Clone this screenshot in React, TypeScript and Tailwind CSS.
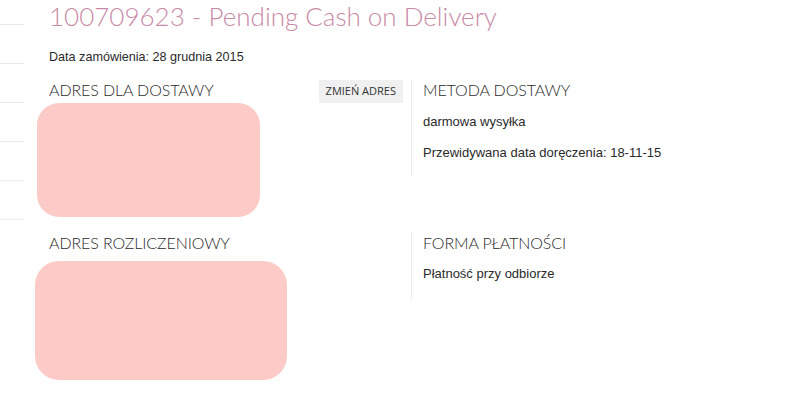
import React from "react";

const heading = "font-['Lato',sans-serif] font-light text-[16px] leading-[20px] text-[#2b2b2b] tracking-[-0.1px]";
const body = "font-['Liberation_Sans',Arial,sans-serif] text-[13px] leading-[15px] text-[#2a2a2a]";

function Sidebar() {
  return (
    <div className="w-[24px] shrink-0 pt-[24px]">
      {[0, 1, 2, 3, 4].map((i) => (
        <div key={i} className="h-[39px] border-t border-[#ebebeb]" />
      ))}
      <div className="border-t border-[#ebebeb]" />
    </div>
  );
}

function Redacted({ className }: { className: string }) {
  return <div className={"bg-[#fdcbc7] " + className} />;
}

export default function App() {
  return (
    <div className="flex w-[811px] h-[409px] bg-white overflow-hidden">
      <Sidebar />
      <div className="pl-[25px] flex-1">
        <h1 className="font-['Lato',sans-serif] font-light text-[26px] leading-[30px] text-[#c98aa7] pt-[1px]">
          100709623 - Pending Cash on Delivery
        </h1>
        <p className="font-['Liberation_Sans',Arial,sans-serif] text-[12.6px] leading-[14px] text-[#2a2a2a] mt-[19px]">
          Data zamówienia: 28 grudnia 2015
        </p>

        <div className="flex mt-[16px]">
          <div className="w-[354px]">
            <div className="flex items-start justify-between">
              <h2 className={heading}>ADRES DLA DOSTAWY</h2>
              <button className="bg-[#f0f0f0] h-[23px] px-[7px] font-['Open_Sans',sans-serif] text-[11px] text-[#333]">
                ZMIEŃ ADRES
              </button>
            </div>
            <Redacted className="-ml-[12px] w-[223px] h-[114px] rounded-[22px]" />
          </div>
          <div className="ml-[8px] border-l border-[#ececec] h-[96px] pl-[11px]">
            <h2 className={heading}>METODA DOSTAWY</h2>
            <p className={body + " mt-[14px]"}>darmowa wysyłka</p>
            <p className={body + " mt-[16px]"}>Przewidywana data doręczenia: 18-11-15</p>
          </div>
        </div>

        <div className="flex mt-[15px]">
          <div className="w-[354px]">
            <h2 className={heading + " mt-[1px]"}>ADRES ROZLICZENIOWY</h2>
            <Redacted className="-ml-[14px] mt-[8px] w-[252px] h-[119px] rounded-[24px]" />
          </div>
          <div className="ml-[8px] border-l border-[#ececec] h-[68px] pl-[11px]">
            <h2 className={heading + " mt-[1px]"}>FORMA PŁATNOŚCI</h2>
            <p className={body + " mt-[13px]"}>Płatność przy odbiorze</p>
          </div>
        </div>
      </div>
    </div>
  );
}
